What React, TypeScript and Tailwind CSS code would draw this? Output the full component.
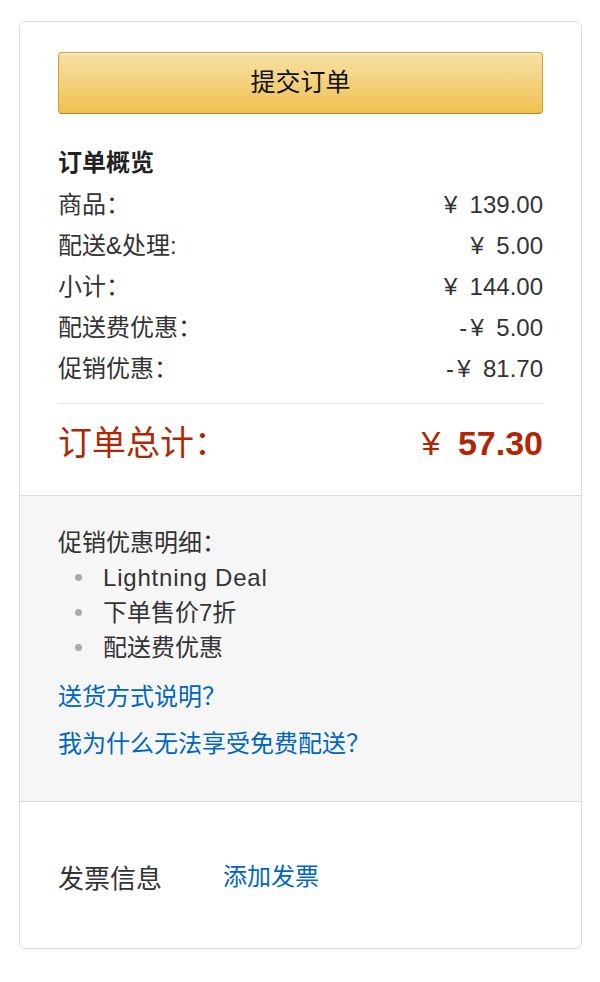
import React from "react";

const FONT = { fontFamily: '"Liberation Sans", "Noto Sans CJK SC", sans-serif' };
const CJK = { fontFamily: '"Noto Sans CJK SC", sans-serif' };

const rows: { label: string; sign?: string; value: string }[] = [
  { label: "商品：", value: "139.00" },
  { label: "配送&处理:", value: "5.00" },
  { label: "小计：", value: "144.00" },
  { label: "配送费优惠：", sign: "-", value: "5.00" },
  { label: "促销优惠：", sign: "-", value: "81.70" },
];

const promos = ["Lightning Deal", "下单售价7折", "配送费优惠"];

function Yen() {
  return <span className="inline-block w-[20px] text-center mr-[9px]">¥</span>;
}

export default function App() {
  return (
    <div className="w-[600px] h-[982px] bg-white pt-[21px]" style={FONT}>
      <div className="ml-[19px] w-[563px] border border-[#dddddd] rounded-[6px] overflow-hidden text-[#333333]">
        {/* summary */}
        <div className="px-[38px] pt-[30px]">
          <button className="w-full h-[62px] rounded-[4px] border border-[#c9a23d] border-b-[#a88734] bg-gradient-to-b from-[#f7e0a6] to-[#f0c14b] text-[25px] text-[#111111] shadow-[inset_0_1px_0_rgba(255,255,255,0.6)]">
            提交订单
          </button>
          <div className="mt-[28px] h-[42px] leading-[42px] text-[24px] font-bold text-[#222222]">订单概览</div>
          {rows.map((r) => (
            <div key={r.label} className="flex justify-between items-center h-[41px] text-[24px]">
              <span>{r.label}</span>
              <span className="flex items-center">
                {r.sign}
                <Yen />
                {r.value}
              </span>
            </div>
          ))}
          <div className="mt-[14px] h-px bg-[#e7e7e7]" />
          <div className="pt-[11px] pb-[24px]">
            <div className="flex justify-between items-center h-[56px] text-[#b12704]">
              <span className="text-[34px]">订单总计：</span>
              <span className="flex items-center text-[34px]">
                <span className="inline-block w-[22px] text-center mr-[16px]">¥</span>
                <span className="font-bold">57.30</span>
              </span>
            </div>
          </div>
        </div>

        {/* promotions */}
        <div className="border-t border-[#dddddd] bg-[#f6f6f6] px-[38px] pt-[29px] pb-[42px] text-[24px]">
          <div className="h-[35px] leading-[35px]">促销优惠明细：</div>
          {promos.map((p) => (
            <div key={p} className="flex items-center h-[35px]">
              <span className="ml-[17px] w-[7px] h-[7px] rounded-full bg-[#aaaaaa]" />
              <span className={p === "Lightning Deal" ? "ml-[21px] tracking-[0.8px]" : "ml-[21px]"}>{p}</span>
            </div>
          ))}
          <div className="mt-[12px] h-[35px] leading-[35px] text-[#0066c0]" style={CJK}>
            送货方式说明？
          </div>
          <div className="mt-[12px] h-[35px] leading-[35px] text-[#0066c0]" style={CJK}>
            我为什么无法享受免费配送？
          </div>
        </div>

        {/* invoice */}
        <div className="border-t border-[#dddddd] px-[38px] pt-[59px] pb-[51px]">
          <div className="flex items-center h-[36px]">
            <span className="w-[165px] text-[26px]">发票信息</span>
            <span className="text-[24px] text-[#0066c0] -mt-[4px]">添加发票</span>
          </div>
        </div>
      </div>
    </div>
  );
}
